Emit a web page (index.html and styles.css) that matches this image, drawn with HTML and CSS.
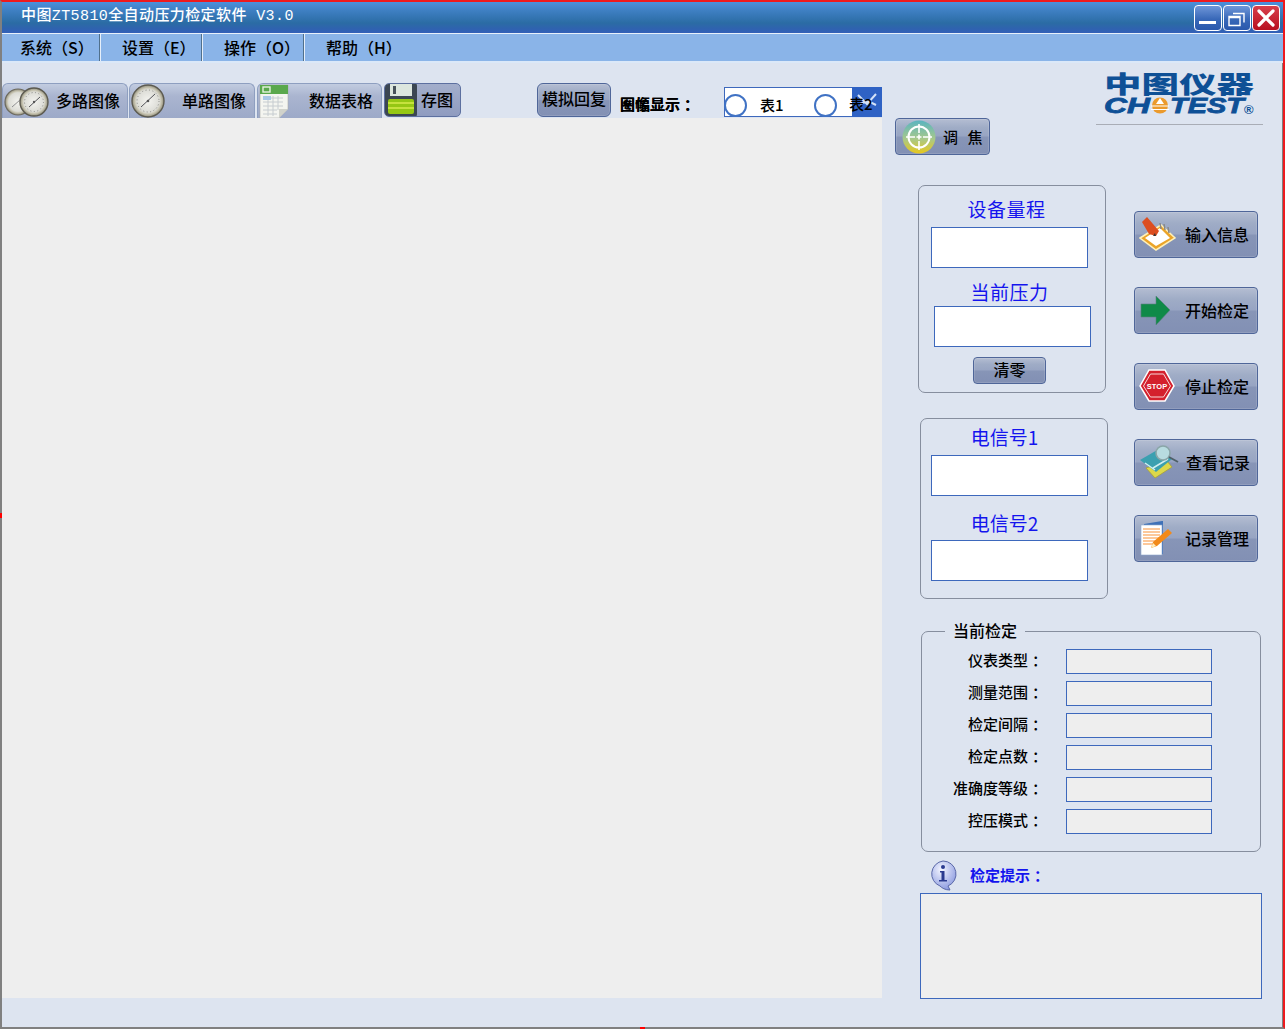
FILE: index.html
```html
<!DOCTYPE html>
<html lang="zh-CN">
<head>
<meta charset="utf-8">
<title>中图ZT5810全自动压力检定软件</title>
<link rel="stylesheet" href="styles.css">
</head>
<body>
<div class="window">
  <span class="grip grip-left"></span>
  <span class="grip grip-bottom"></span>
  <header class="titlebar">
    <div class="app-title">中图ZT5810全自动压力检定软件 V3.0</div>
    <div class="win-controls">
      <button class="win-btn"><svg width="28" height="24" viewBox="0 0 28 24"><rect x="5" y="15" width="17" height="3" fill="#fff"/></svg></button>
      <button class="win-btn"><svg width="28" height="24" viewBox="0 0 28 24"><path d="M10 7.500h11v9M6 10.500h11v9H6z" fill="none" stroke="#fff" stroke-width="1.400"/><path d="M6 11.500h11" stroke="#fff" stroke-width="1.500"/></svg></button>
      <button class="win-btn win-close"><svg width="28" height="24" viewBox="0 0 28 24"><path d="M7 5l14 14M21 5L7 19" stroke="#fff" stroke-width="3.200" stroke-linecap="round"/></svg></button>
    </div>
  </header>
  <nav class="menubar">
    <div class="menu-item">系统（S）</div>
    <div class="menu-item">设置（E）</div>
    <div class="menu-item">操作（O）</div>
    <div class="menu-item">帮助（H）</div>
  </nav>
  <div class="content">
    <main class="work">
      <div class="toolbar">
        <div class="tab tab-wide">
          <svg class="tab-icon" width="46" height="33" viewBox="0 0 46 33"><defs><radialGradient id="dial"><stop offset="0" stop-color="#f4f4f0"/><stop offset=".72" stop-color="#dcdcd6"/><stop offset=".82" stop-color="#c9c6b4"/><stop offset="1" stop-color="#8f8c78"/></radialGradient></defs><circle cx="15" cy="17" r="13" fill="url(#dial)" stroke="#6d6a5e" stroke-width="1.200"/><circle cx="31" cy="17" r="14" fill="url(#dial)" stroke="#5c5a50" stroke-width="1.400"/><circle cx="31" cy="17" r="9.500" fill="none" stroke="#8a8a86" stroke-dasharray="1 2.500"/><path d="M26 22l11-10" stroke="#55555a" stroke-width="1"/><path d="M9 22l8-7" stroke="#77777a" stroke-width=".8"/><circle cx="31" cy="17" r="1.200" fill="#555"/></svg>
          <span class="tab-label">多路图像</span>
        </div>
        <div class="tab tab-wide">
          <svg class="tab-icon" width="36" height="34" viewBox="0 0 36 34"><circle cx="18" cy="17" r="16" fill="url(#dial)" stroke="#5c5a50" stroke-width="1.400"/><circle cx="18" cy="17" r="11" fill="none" stroke="#8a8a86" stroke-dasharray="1 2.500"/><path d="M11 23l14-13" stroke="#55555a" stroke-width="1"/><circle cx="18" cy="17" r="1.300" fill="#555"/></svg>
          <span class="tab-label tab-label-far">单路图像</span>
        </div>
        <div class="tab tab-sheet">
          <svg class="tab-icon" width="32" height="34" viewBox="0 0 32 34"><path d="M2 1h28v24l-9 9H2z" fill="#f4f5f0" stroke="#aaa" stroke-width=".6"/><rect x="2" y="1" width="28" height="9" fill="#5aa84c"/><rect x="5" y="3" width="7" height="5" fill="none" stroke="#e4f2df" stroke-width="1.400"/><path d="M5 14h20M5 18h20M5 22h20M5 26h14M5 30h14M10 12v20M15 12v20M20 12v14" stroke="#c6ccd0" stroke-width="1"/><rect x="5" y="12" width="8" height="4" fill="#a9c8e6"/><path d="M21 34v-9h9z" fill="#d0d2cb"/></svg>
          <span class="tab-label tab-label-sheet">数据表格</span>
        </div>
        <div class="tab tab-save">
          <svg class="save-icon" width="32" height="34" viewBox="0 0 32 34"><rect width="32" height="34" rx="3" fill="#3b4652"/><rect x="5" y="1" width="22" height="12" fill="#dce6de"/><rect x="8" y="3" width="3" height="8" fill="#47525a"/><rect x="3" y="16" width="26" height="15" rx="2" fill="#95c714"/><path d="M3 20h26M3 25h26" stroke="#c6e23e" stroke-width="2"/></svg>
          <span class="save-label">存图</span>
        </div>
        <button class="btn sim-btn">模拟回复</button>
        <div class="overlap-label"><span>图幅显示<span class="colon">：</span></span><span class="overlap-top" aria-hidden="true">圈像显示<span class="colon">：</span></span></div>
        <div class="combo">
          <span class="radio"></span><span class="radio-label">表1</span>
          <span class="radio radio-2"></span>
          <span class="combo-arrow"><svg width="30" height="29" viewBox="0 0 30 29"><path d="M6 8l9 9 9-10M8 17l8-3 8 4" fill="none" stroke="#d5e2f8" stroke-width="2"/></svg></span>
          <span class="radio-label radio-label-2">表2</span>
        </div>
      </div>
      <div class="canvas"></div>
    </main>
    <aside class="side">
      <div class="side-top">
        <button class="btn focus-btn">
          <svg width="36" height="36" viewBox="0 0 36 36"><defs><linearGradient id="lens" x1="0" y1="0" x2="0" y2="1"><stop offset="0" stop-color="#5ab4c0"/><stop offset=".55" stop-color="#a6c88c"/><stop offset="1" stop-color="#e8c81c"/></linearGradient></defs><circle cx="18" cy="18" r="16.500" fill="url(#lens)"/><circle cx="18" cy="18" r="10.500" fill="none" stroke="#fff" stroke-width="2"/><path d="M18 5v9M18 22v9M5 18h9M22 18h9M15.500 18h5M18 15.500v5" stroke="#fff" stroke-width="1.600"/></svg>
          <span class="focus-label">调 焦</span>
        </button>
        <div class="logo-wrap">
          <svg class="logo" width="152" height="44" viewBox="0 0 152 44">
            <text x="0" y="22" class="logo-cn" textLength="150" lengthAdjust="spacingAndGlyphs">中图仪器</text>
            <text x="0" y="42" class="logo-en" textLength="46" lengthAdjust="spacingAndGlyphs">CH</text>
            <circle cx="56" cy="34.500" r="8" fill="#eb9a2c"/><path d="M47 35h18M47 38.500h18" stroke="#fff" stroke-width="1.200"/><path d="M52 33l4-6 4 6z" fill="#fff"/>
            <text x="66" y="42" class="logo-en" textLength="74" lengthAdjust="spacingAndGlyphs">TEST</text>
            <text x="140" y="43" class="logo-r">®</text>
          </svg>
          <div class="logo-rule"></div>
        </div>
      </div>
      <div class="mid">
        <div class="groups">
          <section class="group group-range">
            <div class="group-title title-a">设备量程</div>
            <div class="field"></div>
            <div class="group-title title-b">当前压力</div>
            <div class="field field-shift"></div>
            <button class="btn zero-btn">清零</button>
          </section>
          <section class="group group-signal">
            <div class="group-title signal-a">电信号1</div>
            <div class="field"></div>
            <div class="group-title signal-b">电信号2</div>
            <div class="field"></div>
          </section>
        </div>
        <div class="actions">
          <button class="btn action">
            <svg width="38" height="36" viewBox="0 0 38 36"><path d="M1 22L22 9l14 13-19 12z" fill="#eba428" stroke="#fff0b8" stroke-width="1.500"/><path d="M6 22l15-10 10 10-14 8z" fill="#fff"/><path d="M21 7l1 6M25 8l1 6M29 11l1 6" stroke="#888" stroke-width="1.500"/><path d="M3 6l5-5 12 14-3 5-7-2z" fill="#dc4e20"/><path d="M14 20l3 0-1-3z" fill="#333"/></svg>
            <span class="action-label">输入信息</span>
          </button>
          <button class="btn action">
            <svg width="38" height="36" viewBox="0 0 38 36"><path d="M2 12h15V4l14 14-14 15v-8H2z" fill="#0f8a48" stroke="#5d7f80" stroke-width=".6"/></svg>
            <span class="action-label">开始检定</span>
          </button>
          <button class="btn action">
            <svg width="38" height="36" viewBox="0 0 38 36"><path d="M10 2h16l9 16-9 15H10L1 18z" fill="#d4202c" stroke="#fff" stroke-width="1.500"/><path d="M11.500 6h13l7 12-7 11h-13l-7-11z" fill="none" stroke="#f6d6d6" stroke-width="1"/><text x="18" y="20.500" class="stop-text">STOP</text></svg>
            <span class="action-label">停止检定</span>
          </button>
          <button class="btn action">
            <svg width="44" height="36" viewBox="0 0 44 36"><path d="M7 24l21-7 5 6-17 11z" fill="#dcd84a" stroke="#a8a038" stroke-width=".8"/><path d="M1 16L20 5l13 10-16 13z" fill="#3ba0b0"/><path d="M6 19l10 7M14 24l15-9" stroke="#cfeef0" stroke-width="1.500"/><circle cx="24" cy="9" r="7" fill="#b8dce0" stroke="#8aa6a8" stroke-width="1.600"/><path d="M30 13l9 5" stroke="#4f6068" stroke-width="2"/></svg>
            <span class="action-label action-label-near">查看记录</span>
          </button>
          <button class="btn action">
            <svg width="38" height="36" viewBox="0 0 38 36"><path d="M5 4l18-3h1v33H5z" fill="#3f71b8"/><rect x="2" y="5" width="21" height="30" fill="#fff" stroke="#8ea8cc" stroke-width=".6"/><path d="M4 9h17M4 12h17M4 15h17M4 18h17M4 21h14M4 24h10" stroke="#fcb77b" stroke-width="1.300"/><path d="M12 28l2-6L29 9l4 4-15 13z" fill="#f28a1a"/><path d="M12 28l2-5 3 3z" fill="#fff0c0"/></svg>
            <span class="action-label">记录管理</span>
          </button>
        </div>
      </div>
      <fieldset class="current">
        <legend class="current-legend">当前检定</legend>
        <div class="row"><label class="row-label">仪表类型<span class="colon">：</span></label><div class="row-value"></div></div>
        <div class="row"><label class="row-label">测量范围<span class="colon">：</span></label><div class="row-value"></div></div>
        <div class="row"><label class="row-label">检定间隔<span class="colon">：</span></label><div class="row-value"></div></div>
        <div class="row"><label class="row-label">检定点数<span class="colon">：</span></label><div class="row-value"></div></div>
        <div class="row"><label class="row-label">准确度等级<span class="colon">：</span></label><div class="row-value"></div></div>
        <div class="row"><label class="row-label">控压模式<span class="colon">：</span></label><div class="row-value"></div></div>
      </fieldset>
      <div class="hint-head">
        <svg width="28" height="31" viewBox="0 0 28 31"><defs><radialGradient id="bub" cx=".4" cy=".3" r=".8"><stop offset="0" stop-color="#f4f6ff"/><stop offset="1" stop-color="#8090dc"/></radialGradient></defs><path d="M14 1a13 13 0 0 1 5 25l2 4c-5 0-8-2-10-4A13 13 0 0 1 14 1z" fill="url(#bub)" stroke="#5a68a8"/><circle cx="14" cy="7" r="2" fill="#2a3a90"/><path d="M11 11h4.500v9H18v1.500H10V20h2.500v-7.500H11z" fill="#2a3a90"/></svg>
        <span class="hint-title">检定提示<span class="colon">：</span></span>
      </div>
      <div class="hint-box"></div>
    </aside>
  </div>
</div>
</body>
</html>
```
FILE: styles.css
```css
* { box-sizing: border-box; }
html, body { margin: 0; padding: 0; }
body { width: 1285px; height: 1029px; overflow: hidden; background: #dde4f0; font-family: "Noto Sans CJK SC", "Liberation Sans", sans-serif; color: #000; }
button { font-family: inherit; padding: 0; margin: 0; color: inherit; cursor: default; }
.colon { font-family: "Noto Sans CJK TC", sans-serif; margin-left: 4px; margin-right: -4px; }

.window { position: relative; width: 1285px; height: 1029px; border-top: 2px solid #ee1a1e; border-left: 2px solid #808080; border-right: 2px solid #ee1a1e; border-bottom: 2px solid #808080; background: #dde4f0; display: flex; flex-direction: column; }
.grip { position: absolute; background: #f00; }
.grip-left { left: -2px; top: 511px; width: 2px; height: 5px; }
.grip-bottom { left: 638px; bottom: -2px; width: 5px; height: 2px; }

.titlebar { height: 32px; flex: none; display: flex; align-items: flex-start; justify-content: space-between; padding: 3px 0 0 19px; background: linear-gradient(#4c90dc 0, #3f80c4 8px, #2b6ca4 21px, #2f62b0 27px, #3360b8 31px); border-bottom: 1px solid #e8f0fa; }
.app-title { color: #fff; font-size: 15px; font-weight: 500; line-height: 24px; letter-spacing: .4px; font-family: "Liberation Mono", "Noto Sans CJK SC", monospace; white-space: pre; }
.win-controls { display: flex; gap: 1px; margin-right: 3px; }
.win-btn { width: 28px; height: 26px; border: 1px solid #fff; border-radius: 4px; background: linear-gradient(#6f96d8, #3868b8 55%, #2a58ac); display: block; }
.win-btn svg { display: block; margin: 0 -1px; }
.win-close { background: linear-gradient(#d8404c, #b80f20); }

.menubar { height: 29px; flex: none; display: flex; background: #8ab4e8; border-bottom: 2px solid #dbe8f8; }
.menu-item { width: 102px; height: 27px; padding-left: 21px; font-size: 16px; font-weight: 500; line-height: 26px; border-right: 1px solid #e6effa; white-space: nowrap; box-shadow: inset -1px 0 0 #50708c; }
.menu-item:first-child { width: 99px; padding-left: 18px; }
.menu-item:last-child { border-right: 0; box-shadow: none; }

.content { flex: 1; display: flex; min-height: 0; }
.work { width: 880px; flex: none; padding-top: 20px; }
.toolbar { height: 35px; display: flex; align-items: flex-end; }
.canvas { height: 880px; background: #eeeeee; }

.tab { height: 35px; display: flex; align-items: center; border: 1px solid #8e9fc0; border-bottom: 0; border-radius: 6px 6px 0 0; background: linear-gradient(#c2cce0, #aab5d0 35%, #9daac8); font-size: 16px; font-weight: 500; overflow: hidden; flex: none; }
.tab-wide { width: 126px; margin-right: 1px; }
.tab-sheet { width: 125px; margin-left: 1px; margin-right: 2px; }
.tab-icon { flex: none; display: block; }
.tab-label { margin-left: 7px; white-space: nowrap; padding-bottom: 2px; }
.tab-label-far { margin-left: 16px; }
.tab-label-sheet { margin-left: 19px; }
.tab-save { width: 77px; border: 1px solid #5d70a0; border-radius: 5px; background: linear-gradient(#a3aecb, #8f9cc0); margin-bottom: 1px; height: 34px; }
.save-icon { flex: none; display: block; }
.save-label { margin-left: 4px; padding-bottom: 2px; }

.btn { border: 1px solid #4f6699; border-radius: 4px; background: linear-gradient(#b4bdd2 0, #9facc6 25%, #98a5c3 48%, #8795b7 52%, #8290b4 100%); box-shadow: inset 0 0 0 1px rgba(255,255,255,.12); display: flex; align-items: center; font-size: 16px; font-weight: 500; }
.sim-btn { width: 74px; height: 34px; margin-left: 76px; margin-bottom: 1px; justify-content: center; align-items: flex-start; line-height: 28px; white-space: nowrap; border-radius: 6px; flex: none; }
.overlap-label { position: relative; margin-left: 9px; margin-bottom: 4px; width: 104px; font-size: 15px; font-weight: 700; line-height: 20px; white-space: nowrap; flex: none; }
.overlap-top { position: absolute; left: 0; top: 0; }
.combo { position: relative; width: 158px; height: 30px; border: 1px solid #3d68bc; background: #fff; display: flex; align-items: center; margin-bottom: 1px; flex: none; font-size: 15px; font-weight: 500; }
.radio { width: 23px; height: 23px; border: 2px solid #4072c4; border-radius: 50%; flex: none; margin: 6px 0 0 -1px; background: #fff; }
.radio-label { margin: 5px 0 0 13px; line-height: 20px; white-space: nowrap; }
.radio-2 { margin-left: 30px; }
.combo-arrow { position: absolute; right: -1px; top: -1px; width: 30px; height: 30px; background: #2f62c4; }
.combo-arrow svg { display: block; }
.radio-label-2 { position: absolute; left: 124px; top: 0; margin: 6px 0 0; }

.side { flex: 1; min-width: 0; border-right: 1px solid #808080; }
.side-top { height: 93px; display: flex; justify-content: space-between; align-items: flex-start; }
.focus-btn { width: 95px; height: 37px; margin: 55px 0 0 13px; padding-left: 5px; flex: none; }
.focus-btn svg { display: block; flex: none; }
.focus-label { margin-left: 6px; word-spacing: 6px; white-space: pre; font-size: 15px; }
.logo-wrap { width: 167px; margin: 8px 19px 0 0; }
.logo { display: block; margin-left: 8px; overflow: visible; }
.logo-cn { font: 900 24px "Noto Sans CJK SC", sans-serif; fill: #0e5096; }
.logo-en { font: italic 700 22px "Liberation Sans", sans-serif; fill: #0e5096; stroke: #0e5096; stroke-width: .8px; }
.logo-r { font: 700 13px "Liberation Sans", sans-serif; fill: #0e5096; }
.logo-rule { height: 1px; background: #a9adb6; margin-top: 9px; }
.stop-text { font: 900 7.500px "Liberation Sans", sans-serif; fill: #fff; text-anchor: middle; }

.mid { display: flex; height: 413px; }
.groups { width: 252px; flex: none; padding-left: 36px; }
.group { border: 1px solid #868e9e; border-radius: 7px; width: 188px; display: flex; flex-direction: column; }
.group-range { height: 208px; margin-top: 29px; padding: 11px 0 0 12px; }
.group-signal { height: 181px; margin: 25px 0 0 2px; padding: 6px 0 0 10px; }
.group-title { width: 151px; text-align: center; color: #1414ee; font-size: 19px; line-height: 24px; letter-spacing: .5px; flex: none; }
.title-a { margin-bottom: 6px; }
.title-b { margin: 12px 0 2px 3px; }
.signal-a, .signal-b { width: 157px; margin-left: -5px; letter-spacing: 0; }
.signal-a { margin-bottom: 6px; }
.signal-b { margin-top: 15px; margin-bottom: 5px; }
.field { width: 157px; height: 41px; flex: none; border: 1px solid #3d68bc; background: #fff; }
.field-shift { margin-left: 3px; }
.zero-btn { width: 73px; height: 27px; margin: 10px 0 0 42px; justify-content: center; line-height: 20px; padding-bottom: 3px; flex: none; }

.actions { padding-top: 55px; display: flex; flex-direction: column; gap: 29px; }
.action { width: 124px; height: 47px; flex: none; padding-left: 4px; padding-bottom: 1px; }
.action svg { flex: none; display: block; }
.action-label { margin-left: 8px; white-space: nowrap; padding-bottom: 1px; }
.action-label-near { margin-left: 3px; }

.current { width: 340px; height: 229px; margin: 54px 0 0 39px; border: 1px solid #868e9e; border-radius: 7px; display: block; min-width: 0; padding: 10px 0 0; }
.current-legend { margin-left: 23px; padding: 0 8px 2px; font-size: 16px; font-weight: 500; line-height: 14px; }
.row { display: flex; align-items: flex-start; height: 25px; margin-bottom: 7px; }
.row-label { width: 121px; text-align: right; font-size: 15px; font-weight: 500; line-height: 22px; white-space: nowrap; flex: none; }
.row-value { width: 146px; height: 25px; margin-left: 23px; border: 1px solid #3d68bc; background: #eeeeee; flex: none; }

.hint-head { height: 41px; display: flex; align-items: flex-start; padding: 8px 0 0 47px; }
.hint-head svg { display: block; flex: none; }
.hint-title { margin: 5px 0 0 13px; color: #1414ee; font-size: 15px; font-weight: 700; line-height: 20px; white-space: nowrap; }
.hint-box { width: 342px; height: 106px; margin-left: 38px; border: 1px solid #3d68bc; background: #eeeeee; }
```
